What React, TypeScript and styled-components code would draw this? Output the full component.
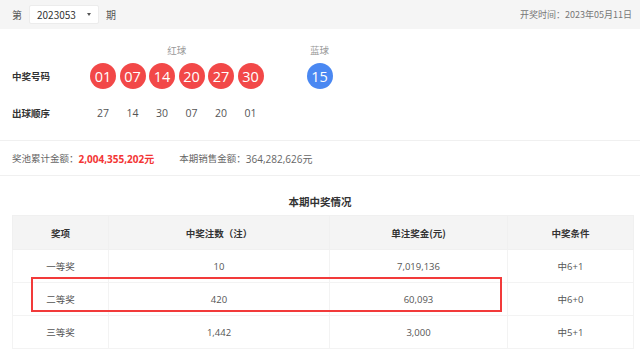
import * as React from "react";
import styled, { createGlobalStyle } from "styled-components";

const GlobalStyle = createGlobalStyle`
  html, body {
    margin: 0;
    padding: 0;
    background: #fff;
  }
  body {
    font-family: "Noto Sans CJK SC", "Noto Sans", sans-serif;
    font-size: 9px;
    color: #555;
  }
`;

const Page = styled.div`
  width: 640px;
  height: 349px;
  overflow: hidden;
`;

const TopBar = styled.div`
  height: 29px;
  background: #f5f5f5;
  display: flex;
  align-items: center;
  justify-content: space-between;
  padding: 0 8px 0 12px;
  color: #555;
  font-size: 10px;
`;

const IssuePicker = styled.div`
  display: flex;
  align-items: center;
  gap: 7px;
`;

const Select = styled.div`
  width: 70px;
  height: 19px;
  box-sizing: border-box;
  background: #fff;
  border: 1px solid #ececec;
  border-radius: 2px;
  display: flex;
  align-items: center;
  justify-content: space-between;
  padding: 0 7px 0 7px;
  color: #333;
  font-size: 10px;
`;

const Caret = styled.span`
  width: 0;
  height: 0;
  border-left: 2.5px solid transparent;
  border-right: 2.5px solid transparent;
  border-top: 3px solid #555;
`;

const DrawDate = styled.span`
  color: #777;
  font-size: 9px;
`;

const Numbers = styled.div`
  padding: 14px 0 0 12px;
`;

const NumberRow = styled.div`
  display: flex;
  align-items: flex-end;
`;

const RowLabel = styled.div`
  width: 78px;
  flex: none;
  font-weight: 700;
  color: #333;
  font-size: 9.5px;
  line-height: 26px;
`;

const BallGroup = styled.div<{ $gap?: number }>`
  display: flex;
  flex-direction: column;
  align-items: center;
  margin-left: ${(p) => p.$gap || 0}px;
`;

const GroupTitle = styled.div`
  color: #999;
  font-size: 9.5px;
  line-height: 14px;
  margin-bottom: 6px;
`;

const Balls = styled.div`
  display: flex;
  gap: 3.5px;
`;

const Ball = styled.div<{ $blue?: boolean }>`
  width: 26px;
  height: 26px;
  border-radius: 50%;
  background: ${(p) => (p.$blue ? "#4a88f2" : "#f24848")};
  color: #fff;
  font-family: "Open Sans", "Noto Sans", sans-serif;
  font-size: 14.5px;
  display: flex;
  align-items: center;
  justify-content: center;
`;

const OrderRow = styled.div`
  display: flex;
  align-items: center;
  margin-top: 16px;
  height: 16px;
`;

const OrderNum = styled.div`
  width: 26px;
  margin-right: 3.5px;
  text-align: center;
  color: #555;
  font-family: "Open Sans", "Noto Sans", sans-serif;
  font-size: 10.5px;
`;

const PoolBar = styled.div`
  margin-top: 19px;
  height: 34px;
  border-top: 1px solid #f0f0f0;
  border-bottom: 1px solid #f0f0f0;
  display: flex;
  align-items: center;
  padding-left: 12px;
  color: #666;
  font-size: 9.5px;
`;

const PoolItem = styled.div`
  display: flex;
  align-items: center;
  margin-right: 25px;
`;

const Amount = styled.span<{ $hot?: boolean }>`
  font-family: "Open Sans", "Noto Sans CJK SC", sans-serif;
  font-size: 10px;
  color: ${(p) => (p.$hot ? "#f33535" : "#666")};
  font-weight: ${(p) => (p.$hot ? 700 : 400)};
`;

const Title = styled.div`
  margin-top: 18px;
  text-align: center;
  font-weight: 700;
  color: #333;
  font-size: 10.5px;
  line-height: 16px;
`;

const TableWrap = styled.div`
  position: relative;
  margin: 5px 7px 0 12px;
`;

const Table = styled.table`
  width: 621px;
  border-collapse: collapse;
  table-layout: fixed;
`;

const Th = styled.th`
  height: 33px;
  padding: 0;
  background: #f4f4f4;
  color: #333;
  font-weight: 700;
  font-size: 9.5px;
  border: 1px solid #f0f0f0;
`;

const Td = styled.td`
  height: 32px;
  padding: 0;
  text-align: center;
  color: #555;
  font-size: 9.5px;
  border: 1px solid #f3f3f3;
  font-family: "Open Sans", "Noto Sans CJK SC", sans-serif;
`;

const Highlight = styled.div`
  position: absolute;
  left: 19px;
  top: 62px;
  width: 471px;
  height: 35px;
  box-sizing: border-box;
  border: 2.5px solid #f23a3a;
  pointer-events: none;
`;

const red = ["01", "07", "14", "20", "27", "30"];
const order = ["27", "14", "30", "07", "20", "01"];
const prizes = [
  ["一等奖", "10", "7,019,136", "中6+1"],
  ["二等奖", "420", "60,093", "中6+0"],
  ["三等奖", "1,442", "3,000", "中5+1"],
  ["", "", "", ""],
];

export default function App() {
  return (
    <Page>
      <GlobalStyle />
      <TopBar>
        <IssuePicker>
          <span>第</span>
          <Select>
            <span>2023053</span>
            <Caret />
          </Select>
          <span>期</span>
        </IssuePicker>
        <DrawDate>开奖时间：2023年05月11日</DrawDate>
      </TopBar>

      <Numbers>
        <NumberRow>
          <RowLabel>中奖号码</RowLabel>
          <BallGroup>
            <GroupTitle>红球</GroupTitle>
            <Balls>
              {red.map((n) => (
                <Ball key={n}>{n}</Ball>
              ))}
            </Balls>
          </BallGroup>
          <BallGroup $gap={43}>
            <GroupTitle>蓝球</GroupTitle>
            <Balls>
              <Ball $blue>15</Ball>
            </Balls>
          </BallGroup>
        </NumberRow>
        <OrderRow>
          <RowLabel>出球顺序</RowLabel>
          {order.map((n) => (
            <OrderNum key={n}>{n}</OrderNum>
          ))}
        </OrderRow>
      </Numbers>

      <PoolBar>
        <PoolItem>
          奖池累计金额：<Amount $hot>2,004,355,202元</Amount>
        </PoolItem>
        <PoolItem>
          本期销售金额：<Amount>364,282,626元</Amount>
        </PoolItem>
      </PoolBar>

      <Title>本期中奖情况</Title>
      <TableWrap>
        <Table>
          <colgroup>
            <col style={{ width: 96 }} />
            <col style={{ width: 221 }} />
            <col style={{ width: 178 }} />
            <col style={{ width: 126 }} />
          </colgroup>
          <thead>
            <tr>
              <Th>奖项</Th>
              <Th>中奖注数（注）</Th>
              <Th>单注奖金(元)</Th>
              <Th>中奖条件</Th>
            </tr>
          </thead>
          <tbody>
            {prizes.map((r, ri) => (
              <tr key={ri}>
                {r.map((c, i) => (
                  <Td key={i}>{c}</Td>
                ))}
              </tr>
            ))}
          </tbody>
        </Table>
        <Highlight />
      </TableWrap>
    </Page>
  );
}
